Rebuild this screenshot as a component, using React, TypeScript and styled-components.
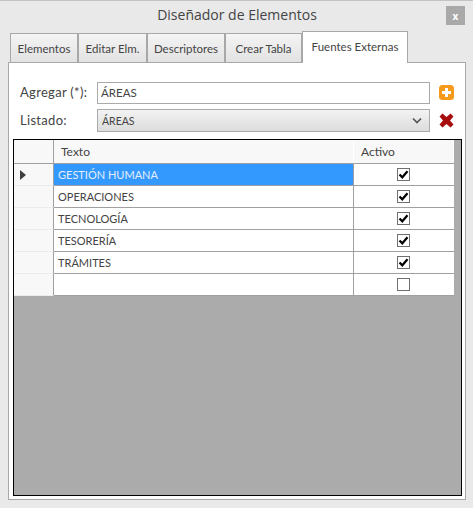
import styled, { createGlobalStyle } from 'styled-components';

const tabs = [
  { label: 'Elementos', width: 68 },
  { label: 'Editar Elm.', width: 69 },
  { label: 'Descriptores', width: 78 },
  { label: 'Crear Tabla', width: 77 },
];

const rows = [
  { text: 'GESTIÓN HUMANA', active: true },
  { text: 'OPERACIONES', active: true },
  { text: 'TECNOLOGÍA', active: true },
  { text: 'TESORERÍA', active: true },
  { text: 'TRÁMITES', active: true },
  { text: '', active: false },
];

function App() {
  return (
    <>
      <GlobalStyle />
      <Window>
        <TitleBar>
          Diseñador de Elementos
          <CloseButton>x</CloseButton>
        </TitleBar>
        <TabStrip>
          {tabs.map((tab) => (
            <Tab key={tab.label} $width={tab.width}>
              {tab.label}
            </Tab>
          ))}
          <ActiveTab>Fuentes Externas</ActiveTab>
        </TabStrip>
        <Panel>
          <FormRow>
            <FieldLabel>Agregar (*):</FieldLabel>
            <TextInput readOnly value='ÁREAS' />
            <IconSlot>
              <svg width='15' height='15' viewBox='0 0 15 15'>
                <rect width='15' height='15' rx='3.5' fill='#f59a1b' />
                <path d='M7.500 3v9M3 7.500h9' stroke='#fff' strokeWidth='3' />
              </svg>
            </IconSlot>
          </FormRow>
          <FormRow>
            <FieldLabel>Listado:</FieldLabel>
            <SelectBox>
              ÁREAS
              <svg width='10' height='7' viewBox='0 0 10 7'>
                <path d='M1 1.500l4 4 4-4' fill='none' stroke='#555' strokeWidth='1.700' />
              </svg>
            </SelectBox>
            <IconSlot>
              <svg width='15' height='15' viewBox='0 0 15 15'>
                <path d='M0.500 3.500L3.500 0.500 7.500 4l4-3.500 3 3L11 7.500l3.500 4-3 3L7.500 11l-4 3.500-3-3L4 7.500z' fill='#a80d0d' />
              </svg>
            </IconSlot>
          </FormRow>
          <Grid>
            <HeaderRow>
              <HeaderCorner />
              <HeaderCell>Texto</HeaderCell>
              <HeaderCell>Activo</HeaderCell>
            </HeaderRow>
            {rows.map((row, index) => (
              <DataRow key={row.text || 'new'}>
                <RowHeader>
                  {index === 0 && (
                    <svg width='6' height='10' viewBox='0 0 6 10'>
                      <path d='M0 0l6 5-6 5z' fill='#404040' />
                    </svg>
                  )}
                </RowHeader>
                <TextCell $selected={index === 0}>{row.text}</TextCell>
                <CheckCell>
                  <CheckBox>
                    {row.active && (
                      <svg width='11' height='11' viewBox='0 0 11 11'>
                        <path d='M1.500 5.500l2.800 2.800 5.200-6' fill='none' stroke='#000' strokeWidth='2.200' />
                      </svg>
                    )}
                  </CheckBox>
                </CheckCell>
              </DataRow>
            ))}
          </Grid>
        </Panel>
      </Window>
    </>
  );
}
export default App;

const GlobalStyle = createGlobalStyle`
  html, body {
    margin: 0;
    padding: 0;
  }
  * {
    box-sizing: border-box;
  }
`;

const Window = styled.div`
  position: relative;
  width: 473px;
  height: 508px;
  padding: 0 7px 0 8px;
  background: #e9e9e9;
  border-top: 1px solid #c4c4c4;
  font-family: 'Lato', 'Liberation Sans', sans-serif;
  color: #444;
  overflow: hidden;
`;

const TitleBar = styled.div`
  height: 30px;
  padding-bottom: 3px;
  display: flex;
  align-items: center;
  justify-content: center;
  font-family: 'Open Sans', 'Liberation Sans', sans-serif;
  font-size: 14px;
  color: #444;
`;

const CloseButton = styled.div`
  position: absolute;
  top: 5px;
  right: 8px;
  width: 19px;
  height: 19px;
  display: flex;
  align-items: center;
  justify-content: center;
  background: #a9a9a9;
  color: #fff;
  font-size: 10px;
  font-weight: 700;
`;

const TabStrip = styled.div`
  display: flex;
  align-items: flex-end;
  height: 32px;
  padding-left: 2px;
  margin-bottom: -1px;
  position: relative;
  z-index: 1;
`;

const Tab = styled.div<{ $width: number }>`
  width: ${(props) => props.$width}px;
  height: 30px;
  display: flex;
  align-items: center;
  justify-content: center;
  background: linear-gradient(#f4f4f4, #e2e2e2);
  border: 1px solid #a8a8a8;
  font-size: 11.500px;
`;

const ActiveTab = styled.div`
  width: 106px;
  height: 32px;
  display: flex;
  align-items: center;
  justify-content: center;
  padding-bottom: 3px;
  background: #fff;
  border: 1px solid #a8a8a8;
  border-bottom: none;
  font-size: 11.500px;
`;

const Panel = styled.div`
  height: 438px;
  padding: 18px 4px 3px 4px;
  background: #fff;
  border: 1px solid #a8a8a8;
  display: flex;
  flex-direction: column;
`;

const FormRow = styled.div`
  display: flex;
  align-items: center;
  height: 23px;
  margin-bottom: 5px;
  padding-left: 7px;
`;

const FieldLabel = styled.div`
  width: 77px;
  padding-bottom: 1px;
  font-size: 13px;
  letter-spacing: 0.3px;
`;

const TextInput = styled.input`
  width: 333px;
  height: 22px;
  padding: 0 3px 1px;
  border: 1px solid #aaa;
  outline: none;
  font-family: inherit;
  font-size: 11.500px;
  color: #444;
`;

const SelectBox = styled.div`
  width: 333px;
  height: 23px;
  padding: 0 7px 0 4px;
  display: flex;
  align-items: center;
  justify-content: space-between;
  border: 1px solid #aaa;
  background: linear-gradient(#f3f3f3, #dcdcdc);
  font-size: 10.500px;
`;

const IconSlot = styled.div`
  margin-left: 9px;
  width: 15px;
  height: 15px;
  display: flex;
`;

const Grid = styled.div`
  flex: 1;
  margin-top: 2px;
  margin-right: -1px;
  background: #ababab;
  border: 1px solid #000;
`;

const HeaderRow = styled.div`
  display: grid;
  grid-template-columns: 40px 300px 100px;
  width: 440px;
  height: 24px;
  background: #f8f8f8;
  border-bottom: 1px solid #a0a0a0;
`;

const HeaderCorner = styled.div`
  border-right: 1px solid #a0a0a0;
`;

const HeaderCell = styled.div`
  display: flex;
  align-items: center;
  padding-left: 7px;
  border-right: 1px solid #fff;
  font-size: 12px;
`;

const DataRow = styled.div`
  display: grid;
  grid-template-columns: 40px 300px 100px;
  width: 440px;
  height: 22px;
`;

const RowHeader = styled.div`
  display: flex;
  align-items: center;
  padding-left: 6px;
  background: #f8f8f8;
  border-right: 1px solid #a0a0a0;
  border-bottom: 1px solid #ececec;
`;

const TextCell = styled.div<{ $selected: boolean }>`
  display: flex;
  align-items: center;
  padding-left: 4px;
  background: ${(props) => (props.$selected ? '#3399ff' : '#fff')};
  color: ${(props) => (props.$selected ? '#e4eefa' : '#444')};
  border-right: 1px solid #a0a0a0;
  border-bottom: 1px solid #a0a0a0;
  font-size: 11px;
`;

const CheckCell = styled.div`
  display: flex;
  align-items: center;
  justify-content: center;
  padding-right: 1px;
  background: #fff;
  border-bottom: 1px solid #a0a0a0;
`;

const CheckBox = styled.div`
  width: 13px;
  height: 13px;
  display: flex;
  align-items: center;
  justify-content: center;
  background: #fff;
  border: 1px solid #707070;
`;
